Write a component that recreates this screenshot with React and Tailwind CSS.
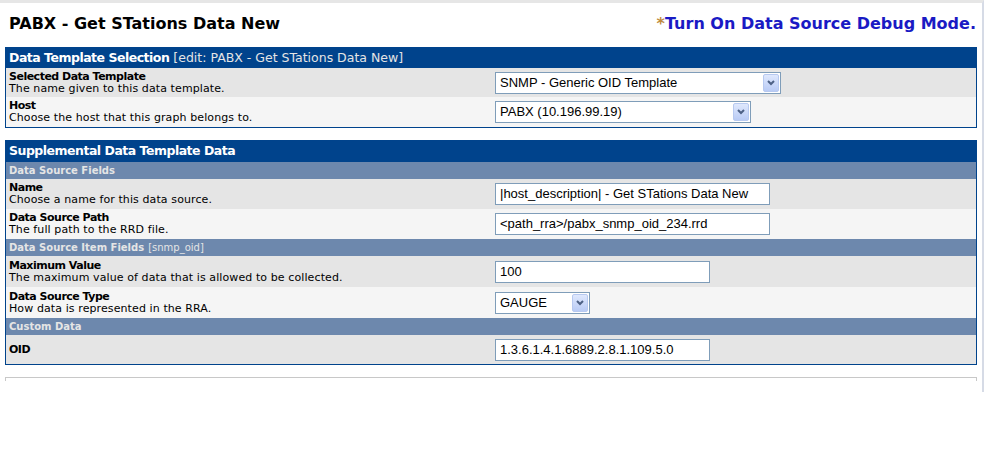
function Select({ value, width }) {
  return (
    <div
      className="flex h-[22px] items-center border border-[#7f9db9] bg-white"
      style={{ width }}
    >
      <span className="flex-1 pl-[4px] font-['Liberation_Sans',sans-serif] text-[13px] text-black">
        {value}
      </span>
      <span className="mr-px flex h-[18px] w-[16px] items-center justify-center rounded-[2px] border border-[#b7c9f0] bg-gradient-to-b from-[#dfe8fd] to-[#b9cbf5]">
        <svg width="8" height="6" viewBox="0 0 8 6">
          <path d="M1 1 L4 4 L7 1" fill="none" stroke="#4d6185" strokeWidth="2" />
        </svg>
      </span>
    </div>
  );
}

function Input({ value, width }) {
  return (
    <div
      className="flex h-[22px] items-center border border-[#7f9db9] bg-white pl-[4px] font-['Liberation_Sans',sans-serif] text-[13px] text-black"
      style={{ width }}
    >
      {value}
    </div>
  );
}

function Row({ label, desc, shade, h, children }) {
  return (
    <div
      className={`grid grid-cols-[489px_1fr] items-center ${shade ? "bg-[#e5e5e5]" : "bg-[#f5f5f5]"} ${h}`}
    >
      <div className="pl-[3px] leading-[12px]">
        <div className="text-[11px] font-bold tracking-[-0.5px] text-black">{label}</div>
        {desc && <div className="text-[11px] tracking-[0.1px] text-black">{desc}</div>}
      </div>
      <div>{children}</div>
    </div>
  );
}

function Sub({ title, extra }) {
  return (
    <div className="flex h-[17px] items-center bg-[#6d88ad] pl-[3px] text-[10px] font-bold text-[#e5e5e5]">
      {title}
      {extra && <span className="ml-1 font-normal">{extra}</span>}
    </div>
  );
}

export default function App() {
  return (
    <div className="h-[450px] w-[989px] bg-white font-['DejaVu_Sans',Verdana,sans-serif]">
      <div className="mr-[5px] h-[392px] border-t-[3px] border-r-[2px] border-t-[#e6e6e6] border-r-[#d6dbe6]">
        <div className="flex items-center justify-between pt-[9px] pl-[9px] pr-[6px]">
          <h1 className="text-[16px] font-bold text-black">
            PABX - Get STations Data New
          </h1>
          <a className="text-[16px] font-bold text-[#1a1ac4]">
            <span className="text-[#c08a3e]">*</span>Turn On Data Source Debug Mode.
          </a>
        </div>

        <div className="mx-[5px] mt-[11px] border border-[#00438c]">
          <div className="flex h-[20px] items-center bg-[#00438c] pl-[3px] text-[12.5px] text-white">
            <span className="font-bold tracking-[-0.5px]">Data Template Selection</span>
            <span className="ml-1 text-[#e5e5e5]">[edit: PABX - Get STations Data New]</span>
          </div>
          <Row label="Selected Data Template" desc="The name given to this data template." shade h="h-[29px]">
            <Select value="SNMP - Generic OID Template" width={286} />
          </Row>
          <Row label="Host" desc="Choose the host that this graph belongs to." h="h-[30px]">
            <Select value="PABX (10.196.99.19)" width={256} />
          </Row>
        </div>

        <div className="mx-[5px] mt-[12px] border border-[#00438c]">
          <div className="flex h-[21px] items-center bg-[#00438c] pl-[3px] text-[12.5px] font-bold tracking-[-0.5px] text-white">
            Supplemental Data Template Data
          </div>
          <Sub title="Data Source Fields" />
          <Row label="Name" desc="Choose a name for this data source." shade h="h-[30px]">
            <Input value="|host_description| - Get STations Data New" width={275} />
          </Row>
          <Row label="Data Source Path" desc="The full path to the RRD file." h="h-[30px]">
            <Input value="<path_rra>/pabx_snmp_oid_234.rrd" width={275} />
          </Row>
          <Sub title="Data Source Item Fields" extra="[snmp_oid]" />
          <Row label="Maximum Value" desc="The maximum value of data that is allowed to be collected." shade h="h-[31px]">
            <Input value="100" width={215} />
          </Row>
          <Row label="Data Source Type" desc="How data is represented in the RRA." h="h-[31px]">
            <Select value="GAUGE" width={95} />
          </Row>
          <Sub title="Custom Data" />
          <Row label="OID" shade h="h-[29px]">
            <Input value="1.3.6.1.4.1.6889.2.8.1.109.5.0" width={215} />
          </Row>
        </div>

        <div className="mx-[5px] mt-[12px] h-[4px] border-x border-t border-[#c8c8c8]"></div>
      </div>
    </div>
  );
}
